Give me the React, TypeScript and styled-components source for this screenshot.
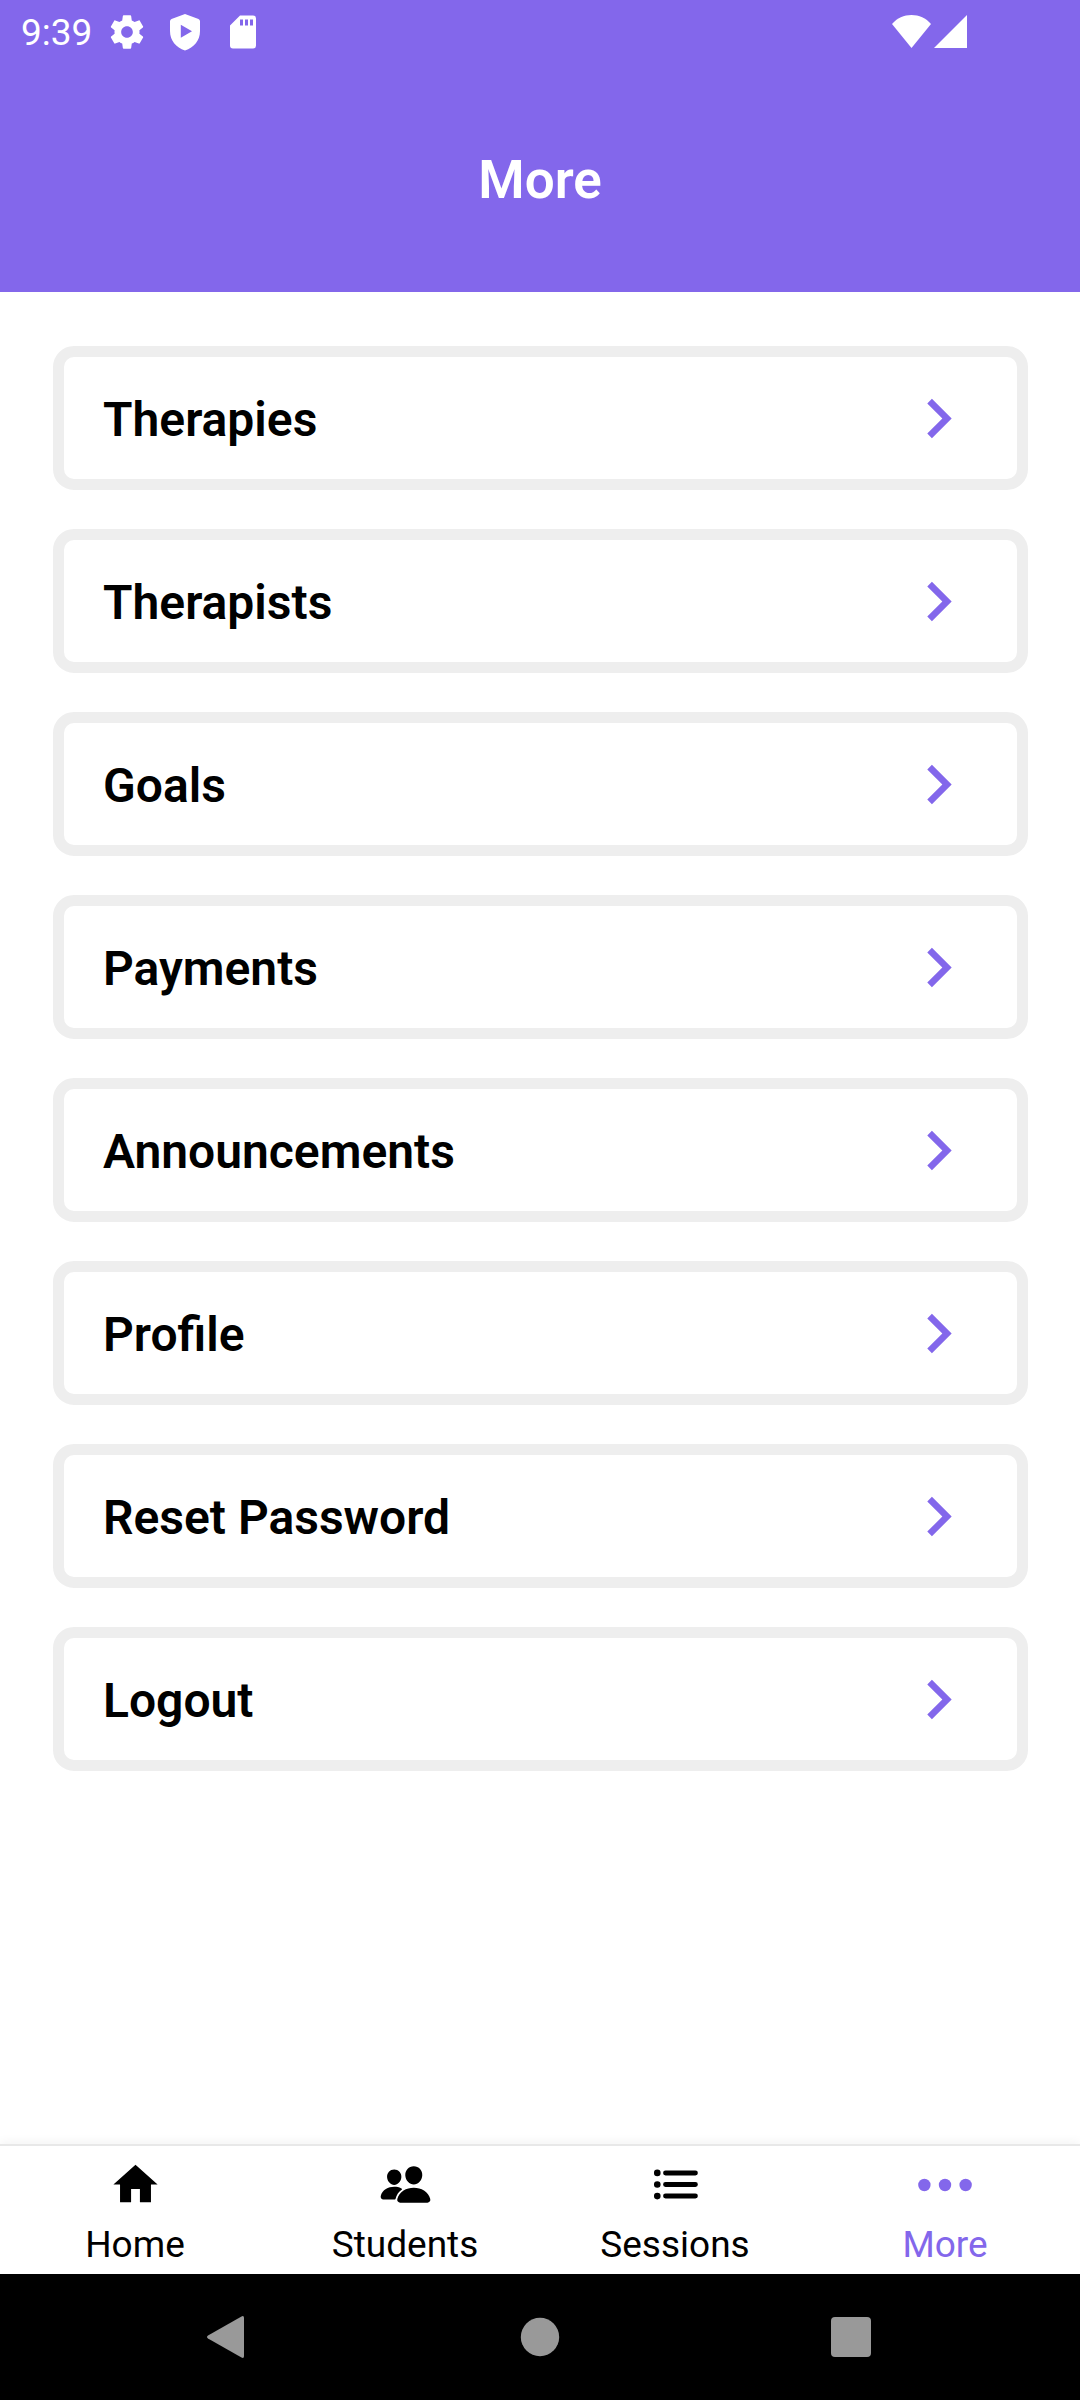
import React from "react";
import styled, { createGlobalStyle } from "styled-components";
import { IoEllipsisHorizontal, IoList, IoPeople } from "react-icons/io5";
import { MdChevronRight } from "react-icons/md";

const PURPLE = "#8367eb";

const GlobalStyle = createGlobalStyle`
  * {
    box-sizing: border-box;
  }
  body {
    margin: 0;
    background: #fff;
    font-family: Roboto, "Liberation Sans", sans-serif;
  }
  button {
    font-family: inherit;
    cursor: pointer;
  }
`;

const Screen = styled.div`
  display: flex;
  flex-direction: column;
  min-height: 100vh;
  background: #fff;
`;

const StatusBar = styled.div`
  display: flex;
  align-items: center;
  justify-content: space-between;
  height: 63px;
  padding: 0 113px 0 21px;
  background: ${PURPLE};
  color: #fff;
`;

const StatusGroup = styled.div<{ $gap: number }>`
  display: flex;
  align-items: center;
  gap: ${(p) => p.$gap}px;

  svg {
    display: block;
  }
`;

const Clock = styled.time`
  padding-top: 2px;
  font-size: 37px;
  line-height: 44px;
`;

const Header = styled.header`
  display: flex;
  align-items: center;
  justify-content: center;
  padding: 86px 21px 81px;
  background: ${PURPLE};
`;

const Title = styled.h1`
  margin: 0;
  color: #fff;
  font-size: 53px;
  font-weight: 600;
  line-height: 62px;
`;

const Menu = styled.main`
  display: flex;
  flex: 1;
  flex-direction: column;
  gap: 39px;
  padding: 54px 52px 54px 53px;
`;

const MenuRow = styled.button`
  display: flex;
  align-items: center;
  justify-content: space-between;
  height: 144px;
  padding: 0 39px;
  border: 11px solid #eee;
  border-radius: 21px;
  background: #fff;
  color: #000;
  text-align: left;
`;

const MenuLabel = styled.span`
  padding-top: 4px;
  font-size: 48px;
  font-weight: 600;
  line-height: 56px;
`;

const Chevron = styled(MdChevronRight)`
  flex: none;
  color: ${PURPLE};
`;

const TabBar = styled.nav`
  display: grid;
  grid-template-columns: repeat(4, 1fr);
  border-top: 2px solid #e8e8e8;
  background: #fff;
  box-shadow: 0 -2px 10px rgba(0, 0, 0, 0.05);
`;

const Tab = styled.button<{ $active: boolean }>`
  display: flex;
  flex-direction: column;
  align-items: center;
  gap: 5px;
  padding: 5px 0 7px;
  border: 0;
  background: none;
  color: ${(p) => (p.$active ? PURPLE : "#000")};
`;

const TabIcon = styled.span`
  display: flex;
  align-items: center;
  justify-content: center;
  height: 67px;
`;

const TabLabel = styled.span`
  font-size: 37px;
  line-height: 44px;
`;

const SystemNav = styled.div`
  display: grid;
  grid-template-columns: repeat(3, 1fr);
  height: 126px;
  padding: 0 73px;
  background: #000;
`;

const SystemButton = styled.button`
  display: flex;
  align-items: center;
  justify-content: center;
  padding: 0;
  border: 0;
  background: none;
  color: #999;
`;

const GearIcon = () => (
  <svg width="40" height="40" viewBox="0 0 24 24" fill="currentColor" aria-hidden="true">
    <path d="M19.43 12.98c.04-.32.07-.64.07-.98s-.03-.66-.07-.98l2.11-1.65c.19-.15.24-.42.12-.64l-2-3.46c-.12-.22-.39-.3-.61-.22l-2.49 1c-.52-.4-1.08-.73-1.69-.98l-.38-2.65C14.46 2.18 14.25 2 14 2h-4c-.25 0-.46.18-.49.42l-.38 2.65c-.61.25-1.17.59-1.69.98l-2.49-1c-.23-.09-.49 0-.61.22l-2 3.46c-.13.22-.07.49.12.64l2.11 1.65c-.04.32-.07.65-.07.98s.03.66.07.98l-2.11 1.65c-.19.15-.24.42-.12.64l2 3.46c.12.22.39.3.61.22l2.49-1c.52.4 1.08.73 1.69.98l.38 2.65c.03.24.24.42.49.42h4c.25 0 .46-.18.49-.42l.38-2.65c.61-.25 1.17-.59 1.69-.98l2.49 1c.23.09.49 0 .61-.22l2-3.46c.12-.22.07-.49-.12-.64l-2.11-1.65zM12 15.500c-1.930 0-3.500-1.570-3.500-3.500s1.570-3.500 3.500-3.500 3.500 1.570 3.500 3.500-1.570 3.500-3.500 3.500z" />
  </svg>
);

const ShieldIcon = () => (
  <svg width="40" height="40" viewBox="0 0 40 40" fill="currentColor" aria-hidden="true">
    <path
      fillRule="evenodd"
      d="M20 2 L33.500 7 Q35 7.700 35 9.300 V19 C35 28.500 29 35.500 20 38.500 C11 35.500 5 28.500 5 19 V9.300 Q5 7.700 6.500 7 Z M15.800 12.800 V25.800 L27 19.300 Z"
    />
  </svg>
);

const CardIcon = () => (
  <svg width="40" height="40" viewBox="0 0 40 40" fill="currentColor" aria-hidden="true">
    <path
      fillRule="evenodd"
      d="M17 3.500 H30 Q33 3.500 33 6.500 V33.500 Q33 36.500 30 36.500 H10 Q7 36.500 7 33.500 V13.500 Z M17 7.500 V13.500 H20 V7.500 Z M22 7.500 V13.500 H25 V7.500 Z M27 7.500 V13.500 H30 V7.500 Z"
    />
  </svg>
);

const WifiIcon = () => (
  <svg width="39" height="33" viewBox="0 0 39 33" fill="currentColor" aria-hidden="true">
    <path d="M19.500 33 L0 9 C5 3 12 0 19.500 0 S34 3 39 9 Z" />
  </svg>
);

const SignalIcon = () => (
  <svg width="33" height="33" viewBox="0 0 33 33" fill="currentColor" aria-hidden="true">
    <path d="M33 0 V33 H0 Z" />
  </svg>
);

const HomeIcon = () => (
  <svg width="53" height="53" viewBox="0 0 24 24" fill="currentColor" aria-hidden="true">
    <path d="M10 20v-6h4v6h5v-8h3L12 3 2 12h3v8z" />
  </svg>
);

const BackShape = () => (
  <svg width="44" height="44" viewBox="0 0 44 44" fill="currentColor" aria-hidden="true">
    <path d="M34.500 1.400 Q37 0.200 37 3 V41 Q37 43.800 34.500 42.600 L1 23.600 Q-1 22 1 20.400 Z" />
  </svg>
);

const HomeShape = () => (
  <svg width="40" height="40" viewBox="0 0 40 40" fill="currentColor" aria-hidden="true">
    <circle cx="20" cy="20" r="19.200" />
  </svg>
);

const RecentShape = () => (
  <svg width="40" height="40" viewBox="0 0 40 40" fill="currentColor" aria-hidden="true">
    <rect width="40" height="40" rx="4" />
  </svg>
);

const menuItems = [
  "Therapies",
  "Therapists",
  "Goals",
  "Payments",
  "Announcements",
  "Profile",
  "Reset Password",
  "Logout",
];

const tabs = [
  { label: "Home", icon: <HomeIcon /> },
  { label: "Students", icon: <IoPeople size={53} /> },
  { label: "Sessions", icon: <IoList size={53} /> },
  { label: "More", icon: <IoEllipsisHorizontal size={66} /> },
];

export default function App() {
  const [active, setActive] = React.useState("More");

  return (
    <Screen>
      <GlobalStyle />
      <StatusBar>
        <StatusGroup $gap={15}>
          <Clock>9:39</Clock>
          <StatusGroup $gap={18}>
            <GearIcon />
            <ShieldIcon />
            <CardIcon />
          </StatusGroup>
        </StatusGroup>
        <StatusGroup $gap={3}>
          <WifiIcon />
          <SignalIcon />
        </StatusGroup>
      </StatusBar>
      <Header>
        <Title>More</Title>
      </Header>
      <Menu>
        {menuItems.map((item) => (
          <MenuRow key={item} type="button">
            <MenuLabel>{item}</MenuLabel>
            <Chevron size={79} aria-hidden="true" />
          </MenuRow>
        ))}
      </Menu>
      <TabBar>
        {tabs.map((tab) => (
          <Tab
            key={tab.label}
            type="button"
            $active={tab.label === active}
            onClick={() => setActive(tab.label)}
          >
            <TabIcon>{tab.icon}</TabIcon>
            <TabLabel>{tab.label}</TabLabel>
          </Tab>
        ))}
      </TabBar>
      <SystemNav>
        <SystemButton type="button" aria-label="Back">
          <BackShape />
        </SystemButton>
        <SystemButton type="button" aria-label="Home screen">
          <HomeShape />
        </SystemButton>
        <SystemButton type="button" aria-label="Recent apps">
          <RecentShape />
        </SystemButton>
      </SystemNav>
    </Screen>
  );
}
